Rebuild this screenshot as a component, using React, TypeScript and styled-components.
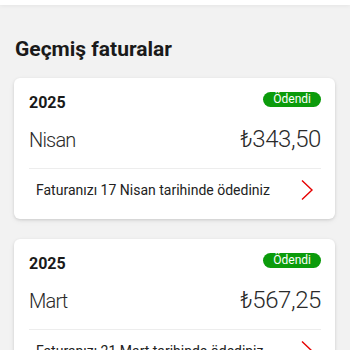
import React, { FC } from "react";
import styled, { createGlobalStyle } from "styled-components";

const GlobalStyle = createGlobalStyle`
  html, body {
    margin: 0;
    padding: 0;
    background: #f2f2f2;
    font-family: Roboto, "Liberation Sans", Arial, sans-serif;
    color: #1c1c1c;
  }
`;

const Page = styled.div`
  width: 350px;
  height: 350px;
  overflow: hidden;
  background: #f2f2f2;
  box-sizing: border-box;
`;

const TopBar = styled.div`
  height: 5px;
  background: #ffffff;
  box-shadow: 0 1px 4px rgba(0, 0, 0, 0.06);
`;

const Content = styled.div`
  padding: 32px 15px 0 14px;
  display: flex;
  flex-direction: column;
`;

const Title = styled.h1`
  margin: 0 0 17px 1px;
  font-size: 21px;
  line-height: 24px;
  font-weight: 700;
  color: #1a1a1a;
`;

const List = styled.div`
  display: flex;
  flex-direction: column;
  gap: 20px;
`;

const Card = styled.div`
  background: #ffffff;
  border-radius: 6px;
  box-shadow: 0 1px 3px rgba(0, 0, 0, 0.12), 0 2px 6px rgba(0, 0, 0, 0.05);
  padding: 15px 14px 18px 15px;
  display: flex;
  flex-direction: column;
`;

const HeaderRow = styled.div`
  display: flex;
  justify-content: space-between;
  align-items: flex-start;
`;

const Year = styled.div`
  font-size: 16px;
  line-height: 20px;
  font-weight: 700;
  color: #1a1a1a;
`;

const Badge = styled.span<{ color?: string }>`
  margin-top: -1px;
  height: 15px;
  padding: 0 10px;
  display: inline-flex;
  align-items: center;
  border-radius: 8px;
  background: ${(p) => p.color || "#0b9b0b"};
  color: #ffffff;
  font-size: 12px;
  line-height: 15px;
`;

const AmountRow = styled.div`
  margin-top: 12px;
  display: flex;
  justify-content: space-between;
  align-items: baseline;
  height: 28px;
`;

const Month = styled.div`
  font-size: 20px;
  font-weight: 300;
  letter-spacing: -0.8px;
  color: #2a2a2a;
`;

const Amount = styled.div`
  font-size: 24px;
  font-weight: 300;
  color: #2a2a2a;
  letter-spacing: -0.4px;
`;

const Divider = styled.div`
  margin: 15px 0 10px 0;
  height: 1px;
  background: #ededed;
`;

const FooterRow = styled.div`
  display: flex;
  justify-content: space-between;
  align-items: center;
  padding-left: 7px;
`;

const FooterText = styled.div`
  font-size: 14px;
  line-height: 20px;
  color: #222222;
`;

const Chevron = styled.svg`
  width: 14px;
  height: 22px;
  margin-right: 7px;
  flex-shrink: 0;
`;

interface Bill {
  year: string;
  month: string;
  amount: string;
  note: string;
}

const bills: Bill[] = [
  {
    year: "2025",
    month: "Nisan",
    amount: "₺343,50",
    note: "Faturanızı 17 Nisan tarihinde ödediniz",
  },
  {
    year: "2025",
    month: "Mart",
    amount: "₺567,25",
    note: "Faturanızı 21 Mart tarihinde ödediniz",
  },
];

const BillCard: FC<{ bill: Bill }> = ({ bill }) => (
  <Card>
    <HeaderRow>
      <Year>{bill.year}</Year>
      <Badge>Ödendi</Badge>
    </HeaderRow>
    <AmountRow>
      <Month>{bill.month}</Month>
      <Amount>{bill.amount}</Amount>
    </AmountRow>
    <Divider />
    <FooterRow>
      <FooterText>{bill.note}</FooterText>
      <Chevron viewBox="0 0 14 22">
        <path
          d="M2 1.5 L12 11 L2 20.5"
          fill="none"
          stroke="#e60000"
          strokeWidth="1.4"
        />
      </Chevron>
    </FooterRow>
  </Card>
);

export default function App() {
  return (
    <>
      <GlobalStyle />
      <Page>
        <TopBar />
        <Content>
          <Title>Geçmiş faturalar</Title>
          <List>
            {bills.map((b) => (
              <BillCard key={b.month} bill={b} />
            ))}
          </List>
        </Content>
      </Page>
    </>
  );
}
